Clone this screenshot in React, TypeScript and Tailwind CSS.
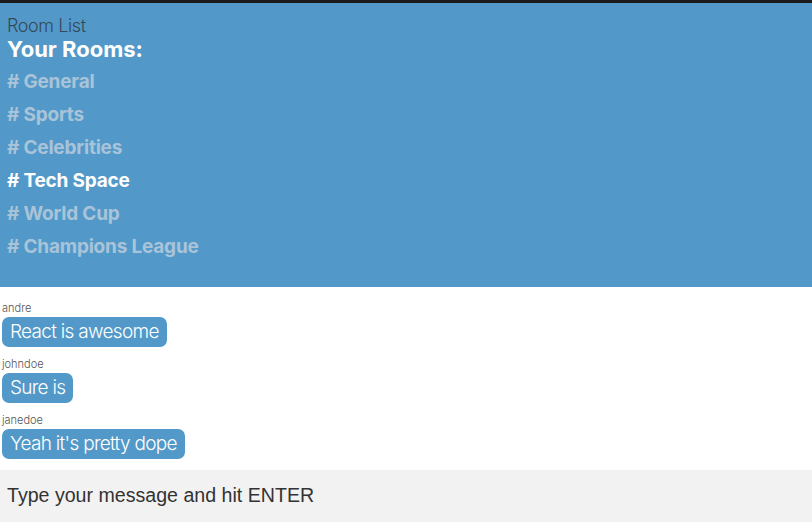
const rooms = ['General', 'Sports', 'Celebrities', 'Tech Space', 'World Cup', 'Champions League'];

const messages = [
  { user: 'andre', text: 'React is awesome' },
  { user: 'johndoe', text: 'Sure is' },
  { user: 'janedoe', text: "Yeah it's pretty dope" },
];

function RoomList() {
  return (
    <div className="bg-[#5299c9] h-[284px] px-[7px] pt-[12px]">
      <div className="text-[18px] leading-[22px] font-light text-[#34495a] tracking-[-0.4px]">Room List</div>
      <h3 className="text-[22px] leading-[24px] font-bold text-white">Your Rooms:</h3>
      <ul className="mt-[4px]">
        {rooms.map((room) => (
          <li
            key={room}
            className={
              room === 'Tech Space'
                ? 'text-[19px] leading-[33px] font-bold text-white tracking-[-0.2px]'
                : 'text-[19px] leading-[33px] font-bold text-[#a9c4d9] tracking-[-0.2px]'
            }
          >
            # {room}
          </li>
        ))}
      </ul>
    </div>
  );
}

function MessageList() {
  return (
    <div className="h-[183px] px-[2px] pt-[15px]">
      {messages.map((m) => (
        <div key={m.user} className="mb-[11px]">
          <div className="text-[11px] leading-[13px] text-[#555] font-light">{m.user}</div>
          <div className="inline-block bg-[#5299c9] text-white text-[19px] leading-[30px] font-light tracking-[-0.7px] rounded-[7px] px-[8px] mt-[2px]">
            {m.text}
          </div>
        </div>
      ))}
    </div>
  );
}

export default function App() {
  return (
    <div className="w-[812px] h-[528px] bg-white font-['Inter','Helvetica_Neue',sans-serif] overflow-hidden">
      <div className="h-[3px] bg-[#1b1b1b]" />
      <RoomList />
      <MessageList />
      <div className="bg-[#f2f2f2] h-[52px] flex items-center px-[7px]">
        <span className="text-[19.6px] text-[#333] font-['Liberation_Sans',sans-serif]">
          Type your message and hit ENTER
        </span>
      </div>
    </div>
  );
}
